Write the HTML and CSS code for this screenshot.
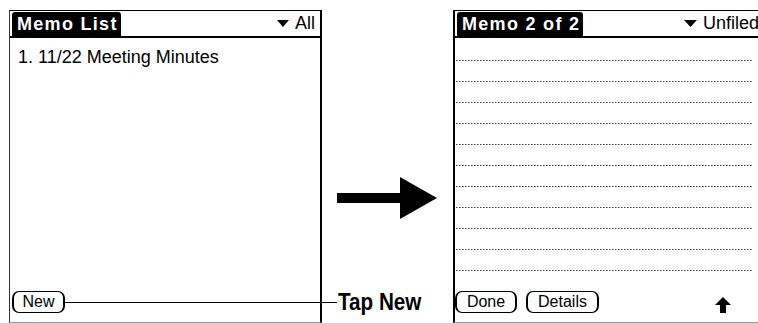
FILE: index.html
```html
<!DOCTYPE html>
<html>
<head>
<meta charset="utf-8">
<link rel="stylesheet" href="styles.css">
</head>
<body>
<div class="stage">
  <section class="screen screen-left">
    <header class="titlebar">
      <div class="tab">Memo List</div>
      <div class="category">
        <svg class="tri" width="12" height="7" viewBox="0 0 12 7"><polygon points="0,0 12,0 6,7" fill="#000"/></svg>
        <span>All</span>
      </div>
    </header>
    <ul class="memo-list">
      <li><span class="num">1.</span> 11/22 Meeting Minutes</li>
    </ul>
    <footer class="buttons">
      <span class="btn btn-new">New</span>
    </footer>
  </section>

  <svg class="big-arrow" width="100" height="42" viewBox="0 0 100 42">
    <rect x="0" y="16" width="64" height="10" fill="#000"/>
    <polygon points="63,0 100,21 63,42" fill="#000"/>
  </svg>

  <section class="screen screen-right">
    <header class="titlebar">
      <div class="tab">Memo 2 of 2</div>
      <div class="category">
        <svg class="tri" width="13" height="7" viewBox="0 0 13 7"><polygon points="0,0 13,0 6.5,7" fill="#000"/></svg>
        <span>Unfiled</span>
      </div>
    </header>
    <div class="lines">
      <div class="line"></div><div class="line"></div><div class="line"></div>
      <div class="line"></div><div class="line"></div><div class="line"></div>
      <div class="line"></div><div class="line"></div><div class="line"></div>
      <div class="line"></div><div class="line"></div>
    </div>
    <footer class="buttons">
      <span class="btn btn-done">Done</span>
      <span class="btn btn-details">Details</span>
      <svg class="up" width="16" height="16" viewBox="0 0 16 16"><polygon points="8,0 16,8 11,8 11,16 5,16 5,8 0,8" fill="#000"/></svg>
    </footer>
  </section>

  <div class="callout">
    <span class="leader"></span>
    <span class="callout-text">Tap New</span>
  </div>
</div>
</body>
</html>
```

FILE: styles.css
```css
html, body {
  margin: 0;
  padding: 0;
  background: #fff;
}

.stage {
  position: relative;
  width: 758px;
  height: 323px;
  box-sizing: border-box;
  padding: 10px 0 0 9px;
  display: flex;
  align-items: flex-start;
  overflow: hidden;
  font-family: "Liberation Sans", Arial, sans-serif;
  color: #000;
}

.screen {
  flex-shrink: 0;
  width: 313px;
  height: 313px;
  box-sizing: border-box;
  border-top: 1px solid #000;
  border-left: 1px solid #333;
  border-right: 2px solid #000;
  border-bottom: 1px solid #999;
  display: flex;
  flex-direction: column;
}

.screen-right {
  border-left: 2px solid #000;
  margin-left: 16px;
}

.titlebar {
  display: flex;
  height: 27px;
  box-sizing: border-box;
  border-bottom: 2px solid #000;
}

.tab {
  margin: 1px 0 0 2px;
  padding: 0 3px 0 5px;
  background: #000;
  color: #fff;
  font-weight: bold;
  font-size: 18px;
  letter-spacing: 1.3px;
  line-height: 24px;
  border-radius: 3px 3px 0 0;
  white-space: nowrap;
}

.category {
  margin-left: auto;
  display: flex;
  align-items: center;
  gap: 6px;
  padding-right: 5px;
  font-size: 18px;
  white-space: nowrap;
}

.memo-list {
  list-style: none;
  margin: 0;
  padding: 9px 0 0 8px;
  font-size: 18px;
  line-height: 20px;
}

.buttons {
  margin-top: auto;
  display: flex;
  align-items: center;
  gap: 9px;
  padding: 0 0 9px 2px;
}

.screen-right .buttons {
  padding-left: 0;
}

.btn {
  display: flex;
  align-items: center;
  justify-content: center;
  height: 22px;
  box-sizing: border-box;
  border: 1px solid #000;
  border-left-width: 2px;
  border-right-width: 2px;
  border-radius: 7px;
  font-size: 16px;
}

.btn-new { width: 53px; }
.btn-done { width: 62px; }
.btn-details { width: 73px; }

.up {
  margin: 6px 33px 0 auto;
}

.big-arrow {
  flex-shrink: 0;
  margin: 167px 0 0 15px;
}

.lines {
  padding-top: 2px;
}

.line {
  height: 21px;
  margin: 0 12px 0 1px;
  background: repeating-linear-gradient(to right, #444 0 1px, #999 1px 2px, transparent 2px 3px) bottom left / 100% 1px no-repeat;
}

.callout {
  position: absolute;
  left: 65px;
  top: 291px;
  height: 22px;
  display: flex;
  align-items: center;
}

.leader {
  width: 272px;
  height: 1px;
  background: #000;
}

.callout-text {
  margin-left: 1px;
  font-weight: bold;
  font-size: 24px;
  line-height: 22px;
  white-space: nowrap;
  transform: scaleX(0.86);
  transform-origin: left center;
}
```
